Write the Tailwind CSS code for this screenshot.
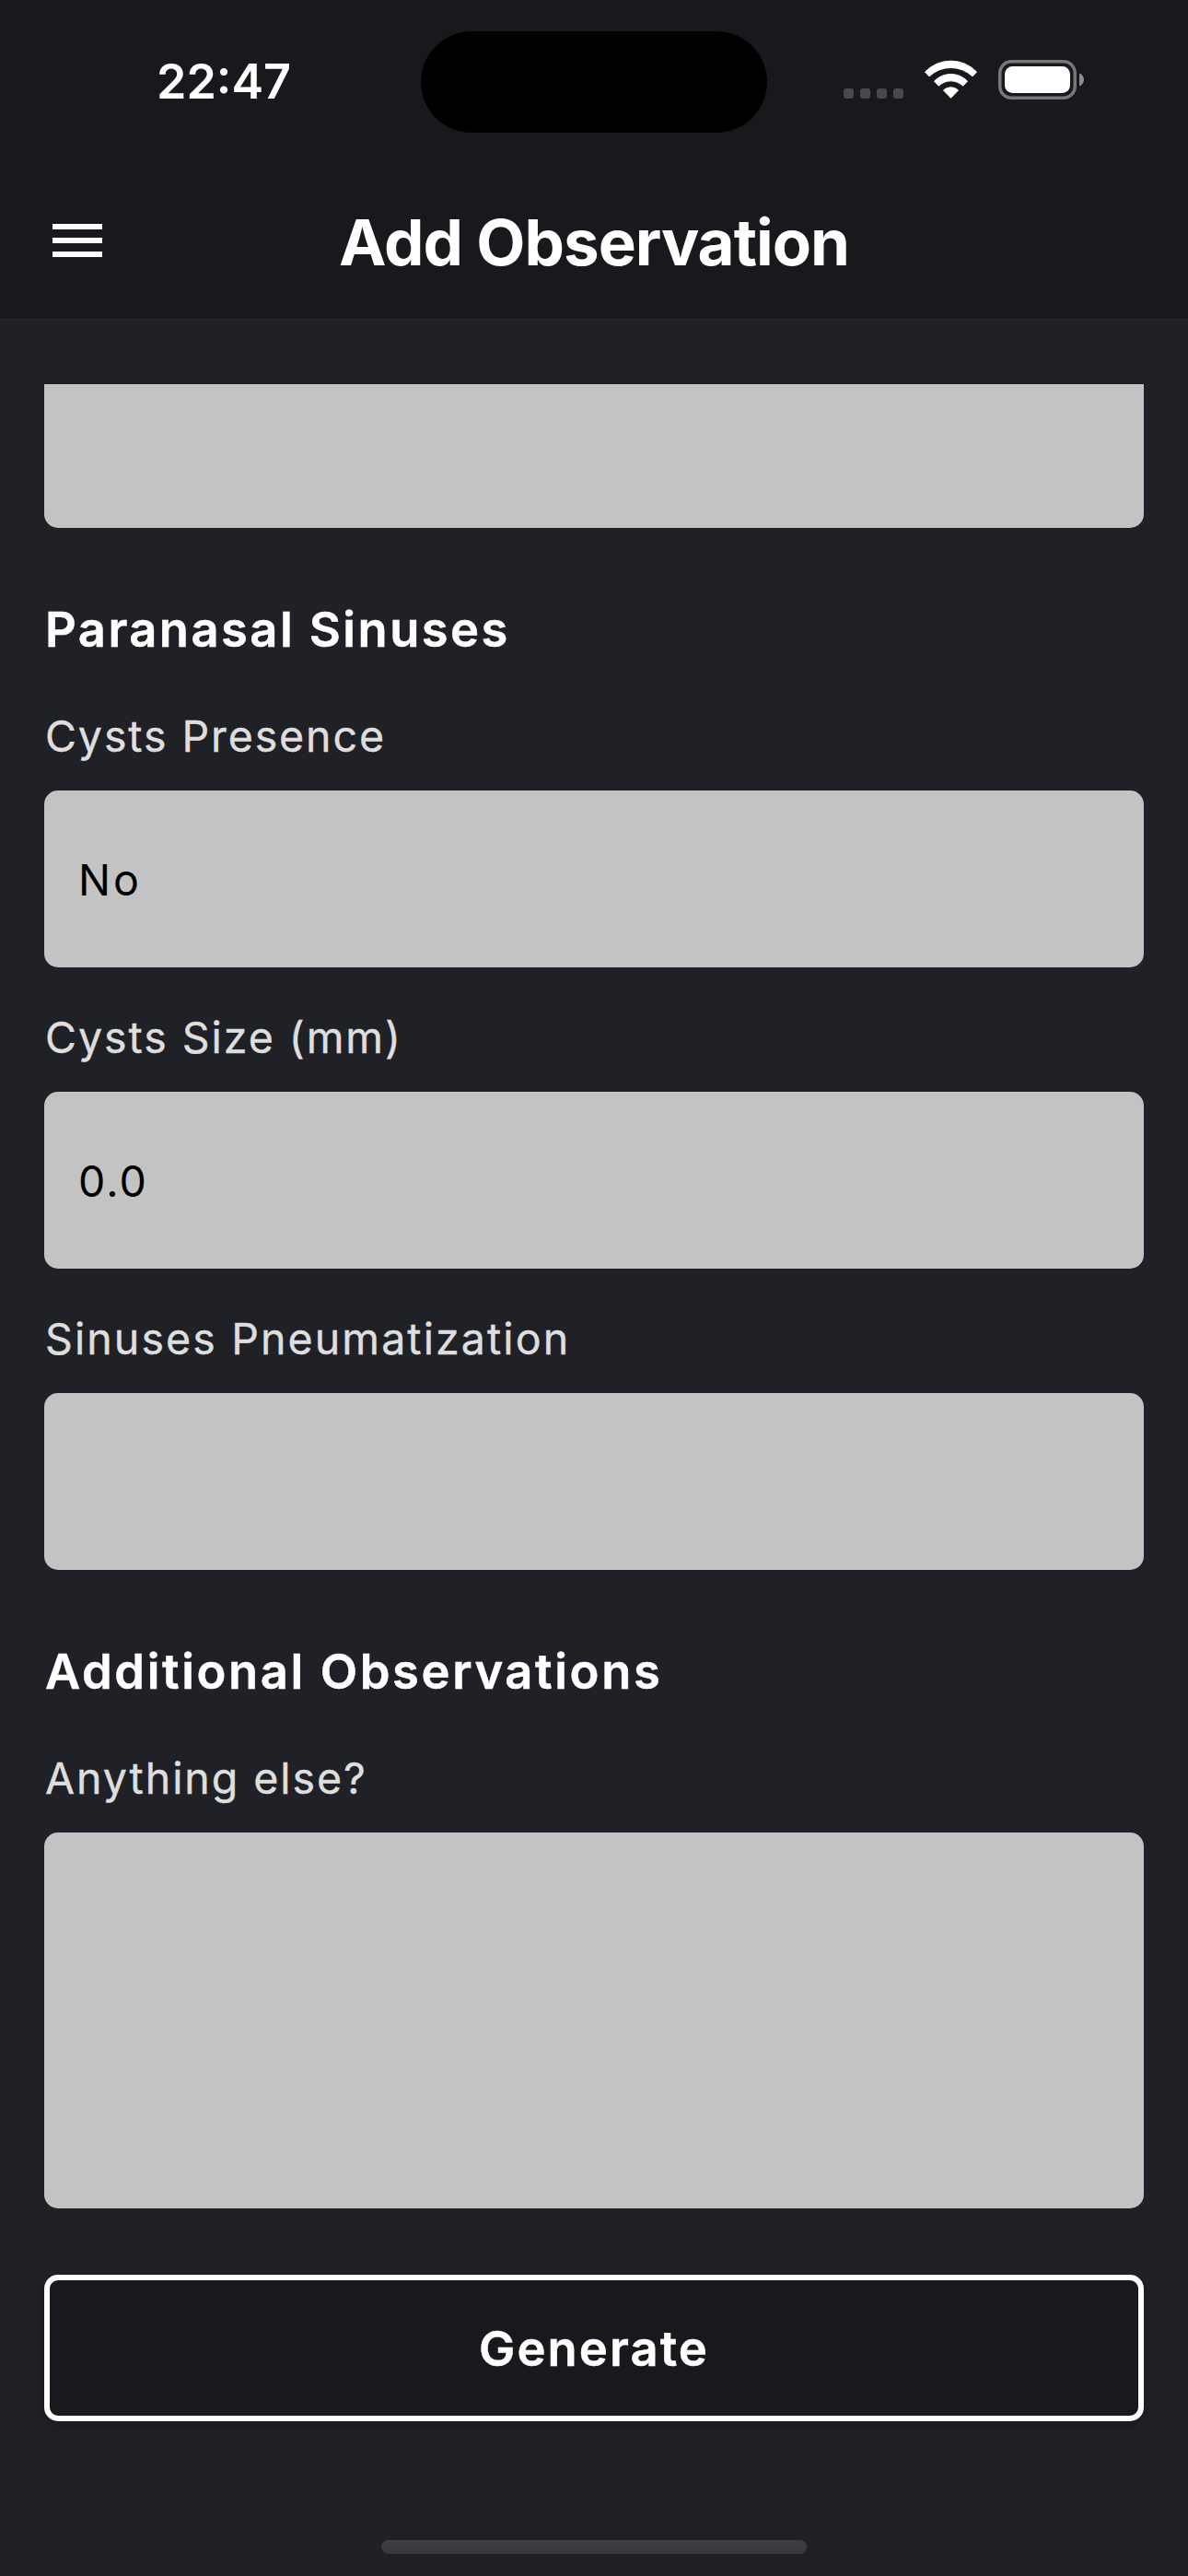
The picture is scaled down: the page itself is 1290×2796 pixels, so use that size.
<!DOCTYPE html>
<html lang="en">
<head>
<meta charset="utf-8">
<meta name="viewport" content="width=device-width, initial-scale=1">
<title>Add Observation</title>
<script src="https://cdn.jsdelivr.net/npm/@tailwindcss/browser@4"></script>
</head>
<body class="flex h-[2796px] w-[1290px] flex-col overflow-hidden bg-[#202126] font-['Inter',sans-serif] text-white">
  <header class="flex h-[345px] shrink-0 flex-col bg-[#18191c]">
    <!-- Status bar -->
    <div class="grid h-[178px] grid-cols-[457px_376px_457px] pt-[34px]">
      <div class="pt-[25px] pl-[170px] text-[52px] leading-[60px] font-semibold">22:47</div>
      <div class="h-[110px] rounded-full bg-black"></div>
      <div class="flex pl-[83px]">
        <div class="flex gap-[7px] pt-[62px]">
          <span class="size-[11px] rounded-[3px] bg-[#48494c]"></span>
          <span class="size-[11px] rounded-[3px] bg-[#48494c]"></span>
          <span class="size-[11px] rounded-[3px] bg-[#48494c]"></span>
          <span class="size-[11px] rounded-[3px] bg-[#48494c]"></span>
        </div>
        <svg class="mt-[31px] ml-[23px] h-[42px] w-[57px]" viewBox="0 0 57 42" fill="#fff" stroke="#fff" stroke-width="1" stroke-linejoin="round">
          <path d="M.5 13A39 39 0 0 1 56.500 13L52 17.900A34 34 0 0 0 5 17.900Z"/>
          <path d="M10.500 23.100A25 25 0 0 1 46.500 23.100L41.700 28.200A19 19 0 0 0 15.300 28.200Z"/>
          <path d="M20.500 33A11.500 11.500 0 0 1 36.500 33L28.500 41.300Z"/>
        </svg>
        <svg class="mt-[31px] ml-[23px] h-[43px] w-[94px]" viewBox="0 0 94 43" fill="none">
          <rect x="1.750" y="1.750" width="81.500" height="39.500" rx="12.500" stroke="#76777a" stroke-width="3.500"/>
          <rect x="7" y="7" width="71" height="29" rx="8.500" fill="#fff"/>
          <path d="M88 14.500C91 15.500 93 18.200 93 21.500S91 27.500 88 28.500Z" fill="#8b8c8e"/>
        </svg>
      </div>
    </div>
    <!-- Navigation bar -->
    <div class="grid grid-cols-[312px_666px_312px] pt-[43px]">
      <button class="mt-[22px] ml-[57px] flex h-9 w-[54px] flex-col gap-[9px]" aria-label="Menu">
        <span class="h-1.5 w-full bg-white"></span>
        <span class="h-1.5 w-full bg-white"></span>
        <span class="h-1.5 w-full bg-white"></span>
      </button>
      <h1 class="text-center text-[69px] leading-[84px] font-bold tracking-[-1px] whitespace-nowrap">Add Observation</h1>
    </div>
  </header>

  <main class="mt-[72px] flex flex-col px-12">
    <div class="h-[156px] rounded-b-[15px] bg-[#c3c3c3]"></div>

    <h2 class="mt-[77px] pl-px text-[52.500px] leading-[67px] font-semibold tracking-[2.450px] [-webkit-text-stroke:0.500px_#fff]">Paranasal Sinuses</h2>

    <label class="mt-[52px] pl-px text-[46.500px] leading-[60px] tracking-[1.900px] text-[#dedede] [-webkit-text-stroke:0.400px_#dedede]">Cysts Presence</label>
    <div class="mt-[29px] flex h-48 items-center rounded-[15px] bg-[#c3c3c3] pt-0.5 pl-[37px] text-[46.500px] leading-[60px] tracking-[3px] text-black">No</div>

    <label class="mt-[46px] pl-px text-[46.500px] leading-[60px] tracking-[1.950px] text-[#dedede] [-webkit-text-stroke:0.400px_#dedede]">Cysts Size (mm)</label>
    <div class="mt-[29px] flex h-48 items-center rounded-[15px] bg-[#c3c3c3] pt-0.5 pl-[37px] text-[46.500px] leading-[60px] tracking-[2.100px] text-black">0.0</div>

    <label class="mt-[46px] pl-px text-[46.500px] leading-[60px] tracking-[2.100px] text-[#dedede] [-webkit-text-stroke:0.400px_#dedede]">Sinuses Pneumatization</label>
    <div class="mt-[29px] h-48 rounded-[15px] bg-[#c3c3c3]"></div>

    <h2 class="mt-[77px] pl-px text-[52.500px] leading-[67px] font-semibold tracking-[2.600px] [-webkit-text-stroke:0.500px_#fff]">Additional Observations</h2>

    <label class="mt-[52px] pl-px text-[46.500px] leading-[60px] tracking-[1.950px] text-[#dedede] [-webkit-text-stroke:0.400px_#dedede]">Anything else?</label>
    <div class="mt-[29px] h-[408px] rounded-[15px] bg-[#c3c3c3]"></div>

    <button class="mt-[72px] h-[159px] rounded-[15px] border-6 border-white bg-[#18191c] pt-px text-[52.500px] leading-[66px] font-semibold tracking-[2.100px] shadow-[0_4px_8px_rgba(0,0,0,0.25)] [-webkit-text-stroke:0.500px_#fff]">Generate</button>
  </main>

  <!-- Home indicator -->
  <div class="mt-auto mb-6 h-[15px] w-[462px] self-center rounded-full bg-linear-to-b from-[#3e3f40] to-[#37383a]"></div>
</body>
</html>
